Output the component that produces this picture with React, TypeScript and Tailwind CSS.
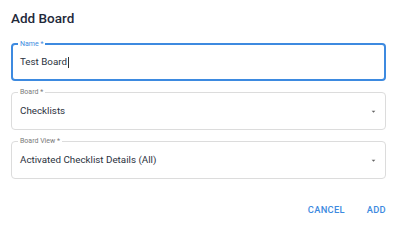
import React from "react";

function Field({
  label,
  value,
  focused,
  select,
}: {
  label: string;
  value: string;
  focused?: boolean;
  select?: boolean;
}) {
  return (
    <div
      className={`relative h-[38px] rounded-[4px] flex items-center pr-[7px] ${
        focused ? "border-2 border-[#3d8ae0] pl-[7px]" : "border border-[#dcdcdc] pl-[8px]"
      }`}
    >
      <span
        className={`absolute top-[-5px] px-[2px] bg-white text-[7px] leading-[8px] ${
          focused ? "left-[5px] text-[#3d8ae0]" : "left-[6px] text-[#7a7a7a]"
        }`}
      >
        {label}
      </span>
      <span className="flex-1 text-[9.8px] text-[#2b3240]">
        {value}
        {focused && <span className="inline-block w-[1px] h-[11px] bg-[#333] align-middle ml-[0.5px]" />}
      </span>
      {select && (
        <svg width="9" height="9" viewBox="0 0 24 24" className="text-[#666]">
          <path d="M7 10l5 5 5-5z" fill="currentColor" />
        </svg>
      )}
    </div>
  );
}

export default function App() {
  return (
    <div
      className="w-[400px] h-[226px] bg-white flex flex-col"
      style={{ fontFamily: "Roboto, 'Liberation Sans', sans-serif" }}
    >
      <div className="px-[11px] pt-[8px] text-[13.5px] font-medium text-[#1f293a] leading-[20px]">
        Add Board
      </div>
      <div className="px-[11px] pt-[15px] flex flex-col gap-[11px] pr-[14px]">
        <Field label="Name *" value="Test Board" focused />
        <Field label="Board *" value="Checklists" select />
        <Field label="Board View *" value="Activated Checklist Details (All)" select />
      </div>
      <div className="flex justify-end gap-[22px] pr-[14px] pt-[24px] text-[9.3px] font-medium tracking-[0.3px] text-[#3d8ae0]">
        <span>CANCEL</span>
        <span>ADD</span>
      </div>
    </div>
  );
}
